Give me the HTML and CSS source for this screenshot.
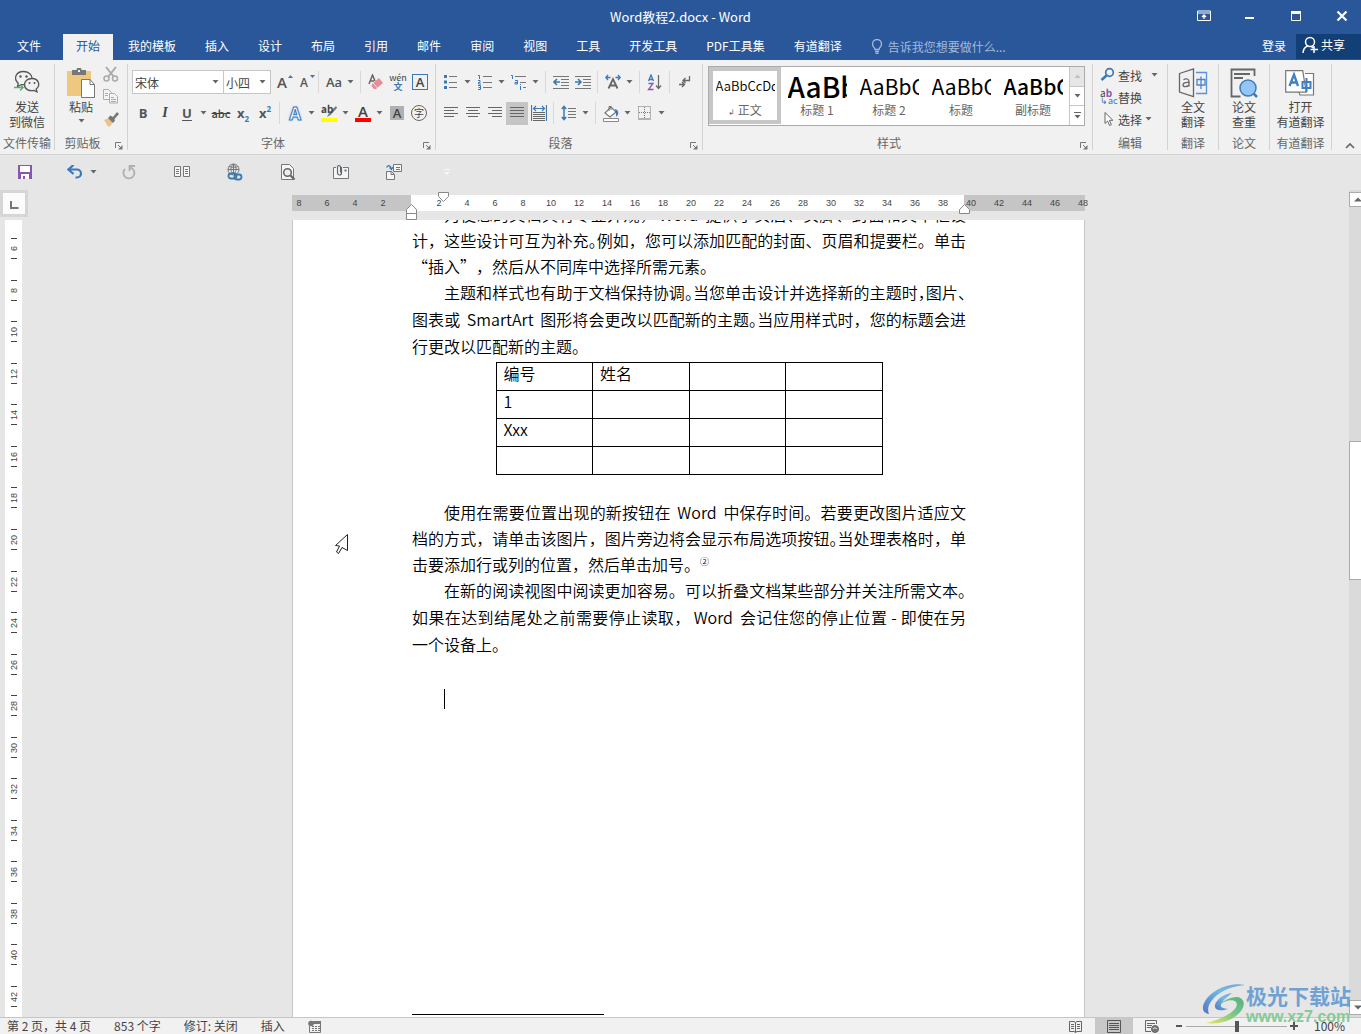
FILE: index.html
```html
<!DOCTYPE html>
<html lang="zh-CN">
<head>
<meta charset="utf-8">
<title>Word教程2.docx - Word</title>
<link rel="stylesheet" href="styles.css">
</head>
<body>
<svg class="defs" width="0" height="0" aria-hidden="true">
  <symbol id="caret" viewBox="0 0 7 4"><path d="M0.500 0h6L3.500 3.500z" fill="#666"/></symbol>
  <symbol id="launch" viewBox="0 0 8 8"><path d="M.5 6V.5H6" fill="none" stroke="#777"/><path d="M3 3l3 3" stroke="#777"/><path d="M7.500 3v4.500H3z" fill="#777"/></symbol>
</svg>

<header class="titlebar">
  <h1 class="doc-title">Word教程2.docx - Word</h1>
  <div class="window-buttons">
    <button type="button" aria-label="功能区显示选项"><svg width="14" height="12" viewBox="0 0 14 12"><path d="M.5 1h13v9.500H.5zM.5 3h13" fill="none" stroke="#fff"/><path d="M7 9V5M5 7l2-2 2 2" fill="none" stroke="#fff" stroke-width="1.300"/></svg></button>
    <button type="button" aria-label="最小化"><svg width="12" height="12"><path d="M1 7h9v2H1z" fill="#fff"/></svg></button>
    <button type="button" aria-label="最大化"><svg width="12" height="12"><path d="M1.500 1.500h9v9h-9zM1 2.500h10" fill="none" stroke="#fff"/><path d="M1 1h10v3H1z" fill="#fff"/></svg></button>
    <button type="button" aria-label="关闭"><svg width="12" height="12"><path d="M1.500 1.500l9 9M10.500 1.500l-9 9" stroke="#fff" stroke-width="2.200"/></svg></button>
  </div>
</header>

<nav class="tabs">
  <button type="button" class="tab file-tab">文件</button>
  <button type="button" class="tab active">开始</button>
  <button type="button" class="tab">我的模板</button>
  <button type="button" class="tab">插入</button>
  <button type="button" class="tab">设计</button>
  <button type="button" class="tab">布局</button>
  <button type="button" class="tab">引用</button>
  <button type="button" class="tab">邮件</button>
  <button type="button" class="tab">审阅</button>
  <button type="button" class="tab">视图</button>
  <button type="button" class="tab">工具</button>
  <button type="button" class="tab">开发工具</button>
  <button type="button" class="tab">PDF工具集</button>
  <button type="button" class="tab">有道翻译</button>
  <label class="tell-me">
    <svg width="12" height="15" viewBox="0 0 12 15"><path d="M4 10.500C4 8.500 1.500 8 1.500 5a4.500 4.500 0 0 1 9 0c0 3-2.500 3.500-2.500 5.500zM4 12.500h4M4.500 14.300h3" fill="none" stroke="#a3b9d9" stroke-width="1.300"/></svg>
    <input type="text" placeholder="告诉我您想要做什么..." aria-label="告诉我您想要做什么">
  </label>
  <button type="button" class="login">登录</button>
  <button type="button" class="share"><svg width="16" height="18" viewBox="0 0 16 18"><circle cx="8" cy="6" r="4.500" fill="none" stroke="#fff" stroke-width="1.500"/><path d="M1 17c.3-4 2-6 4.500-7M9.500 10.500L11 12M12 10v7M8.500 13.500H16" fill="none" stroke="#fff" stroke-width="1.500"/></svg>共享</button>
</nav>

<section class="ribbon">
  <div class="group g-wechat">
    <div class="body">
      <button type="button" class="big"><svg width="28" height="28" viewBox="0 0 28 28" fill="none" stroke="#555"><path d="M12 15.500c-1 .3-2 .3-3.500.1L4.500 17.500l.7-3.300C0 9.500 3 2.500 10.500 2.500c5 0 8.300 3 8.500 6.500" stroke-width="1.300"/><path d="M19 9.500c-4.500 0-7.500 2.800-7.500 6.200 0 4.300 4.500 6.800 9.300 5.700l3.200 1.500-.8-2.800c5-4 2-10.600-4.200-10.600z" stroke-width="1.300"/><path d="M1 18.500h9M7 15.500l3.200 3L7 21.500" stroke="#5faa6d" stroke-width="1.300"/><g fill="#555" stroke="none"><circle cx="7.500" cy="7.500" r="1.200"/><circle cx="13.500" cy="7.500" r="1.200"/><circle cx="16.500" cy="14" r="1"/><circle cx="21.500" cy="14" r="1"/></g></svg><span>发送<br>到微信</span></button>
    </div>
    <div class="caption">文件传输</div>
  </div>

  <div class="group g-clip">
    <div class="body">
      <button type="button" class="big paste"><svg width="28" height="30" viewBox="0 0 28 30"><path d="M0 3h24v25H0z" fill="#edc87e"/><path d="M5 2h4.500a2.500 2.500 0 0 1 5 0H19v5H5z" fill="#777"/><path d="M11 2h2v2h-2z" fill="#f1f1f1"/><path d="M14.500 11.500h8.500l4.500 5v13h-13z" fill="#fff" stroke="#777"/><path d="M23 11.500v5h4.500" fill="none" stroke="#777"/></svg><span>粘贴</span><svg class="caret" width="7" height="4"><use href="#caret"/></svg></button>
      <div class="clip-tools">
        <button type="button" aria-label="剪切"><svg width="16" height="16" fill="none" stroke="#aaa"><path d="M3 1l8 10M13 1L5 11" stroke-width="2"/><circle cx="3.500" cy="12.500" r="2.500" stroke-width="1.500"/><circle cx="12" cy="12.500" r="2.500" stroke-width="1.500"/></svg></button>
        <button type="button" aria-label="复制"><svg width="16" height="15" fill="#f5f1f7" stroke="#b0a8b4"><path d="M.5.5h5l3 3v7h-8z"/><path d="M6.500 4.500h5l3 3v6.500h-8z"/><path d="M2 4.500h3M2 6.500h3M8 8.500h3M8 10.500h5M8 12.500h5" fill="none"/></svg></button>
        <button type="button" aria-label="格式刷"><svg width="16" height="16"><path d="M1 9l5-2 4 4-3 4.500H5z" fill="#edc288"/><path d="M5 7l2.500-2.500L10 6l4-5 2 2-4.500 5 .5 1.500L10 12z" fill="#777"/></svg></button>
      </div>
    </div>
    <div class="caption with-launcher">剪贴板<button type="button" class="launcher" aria-label="剪贴板选项"><svg width="8" height="8"><use href="#launch"/></svg></button></div>
  </div>

  <div class="group g-font">
    <div class="body rows">
      <div class="row">
        <label class="combo wide"><select aria-label="字体"><option>宋体</option></select><svg class="caret" width="7" height="4"><use href="#caret"/></svg></label>
        <label class="combo"><select aria-label="字号"><option>小四</option></select><svg class="caret" width="7" height="4"><use href="#caret"/></svg></label>
        <button type="button" class="tool letter">A<svg class="sup" width="5" height="3"><path d="M0 3l2.500-3L5 3z" fill="#3c78b4"/></svg></button>
        <button type="button" class="tool letter small">A<svg class="sup" width="5" height="3"><path d="M0 0l2.500 3L5 0z" fill="#3c78b4"/></svg></button>
        <i class="sep"></i>
        <button type="button" class="tool aa">Aa</button><button type="button" class="drop" aria-label="更改大小写选项"><svg width="7" height="4"><use href="#caret"/></svg></button>
        <i class="sep"></i>
        <button type="button" class="tool" aria-label="清除格式"><svg width="16" height="16"><path d="M1 10L4.500 1 7 7M2.500 7H6" fill="none" stroke="#666" stroke-width="1.500"/><path d="M4 10l7-6 4 5-7 6H6l-2.500-3z" fill="#ea8c96"/><path d="M5 9l4.500 5" stroke="#f8dcdf"/></svg></button>
        <button type="button" class="tool pinyin"><span>wén</span><b>文</b></button>
        <button type="button" class="tool"><span class="boxed-a">A</span></button>
      </div>
      <div class="row">
        <button type="button" class="tool bold">B</button>
        <button type="button" class="tool italic">I</button>
        <button type="button" class="tool underline">U</button><button type="button" class="drop" aria-label="下划线选项"><svg width="7" height="4"><use href="#caret"/></svg></button>
        <button type="button" class="tool strike">abc</button>
        <button type="button" class="tool script">x<sub>2</sub></button>
        <button type="button" class="tool script">x<sup>2</sup></button>
        <i class="sep"></i>
        <button type="button" class="tool effect">A</button><button type="button" class="drop" aria-label="文本效果选项"><svg width="7" height="4"><use href="#caret"/></svg></button>
        <button type="button" class="tool highlight"><span>ab</span><svg width="16" height="17"><path d="M15 1L8 8l-2 4 3.500-2L16 3z" fill="#777"/><path d="M0 13h16v4H0z" fill="#ff0"/></svg></button><button type="button" class="drop" aria-label="突出显示颜色"><svg width="7" height="4"><use href="#caret"/></svg></button>
        <button type="button" class="tool"><span class="font-color">A</span></button><button type="button" class="drop" aria-label="字体颜色选项"><svg width="7" height="4"><use href="#caret"/></svg></button>
        <button type="button" class="tool"><span class="shaded-a">A</span></button>
        <button type="button" class="tool"><span class="circled">字</span></button>
      </div>
    </div>
    <div class="caption with-launcher">字体<button type="button" class="launcher" aria-label="字体选项"><svg width="8" height="8"><use href="#launch"/></svg></button></div>
  </div>

  <div class="group g-para">
    <div class="body rows">
      <div class="row">
        <button type="button" class="tool" aria-label="项目符号"><svg width="16" height="16"><path d="M1 1h3v3H1zM1 6.500h3v3H1zM1 12h3v3H1z" fill="#3c78b4"/><path d="M6 2.500h8M6 8.500h8M6 13.500h8" stroke="#777"/></svg></button><button type="button" class="drop" aria-label="项目符号选项"><svg width="7" height="4"><use href="#caret"/></svg></button>
        <button type="button" class="tool" aria-label="编号"><svg width="16" height="16"><path d="M1 1.500h1.500V5M1 6.500h2v2H1.500V10H4M1 11.500h2.500v4H1M1.500 13.500h2" fill="none" stroke="#3c78b4"/><path d="M6 2.500h9M6 8.500h9M6 13.500h9" stroke="#777"/></svg></button><button type="button" class="drop" aria-label="编号选项"><svg width="7" height="4"><use href="#caret"/></svg></button>
        <button type="button" class="tool" aria-label="多级列表"><svg width="18" height="16"><path d="M1 1.500h1.500V5M5 6.500h2.500V10H5V8.500h2M10.500 10v1M10.500 12v4" fill="none" stroke="#3c78b4"/><path d="M5 2.500h11M10 8.500h6M13 13.500h3" stroke="#777"/></svg></button><button type="button" class="drop" aria-label="多级列表选项"><svg width="7" height="4"><use href="#caret"/></svg></button>
        <i class="sep"></i>
        <button type="button" class="tool" aria-label="减少缩进量"><svg width="16" height="14"><path d="M0 1.500h16M8 4.500h8M8 7.500h8M8 10.500h8M0 13.500h16" stroke="#777"/><path d="M7 7H1M4 4L1 7l3 3" fill="none" stroke="#3c78b4" stroke-width="1.600"/></svg></button>
        <button type="button" class="tool" aria-label="增加缩进量"><svg width="16" height="14"><path d="M0 1.500h16M8 4.500h8M8 7.500h8M8 10.500h8M0 13.500h16" stroke="#777"/><path d="M0 7h6M3 4l3 3-3 3" fill="none" stroke="#3c78b4" stroke-width="1.600"/></svg></button>
        <i class="sep"></i>
        <button type="button" class="tool" aria-label="中文版式"><svg width="16" height="16"><path d="M3.500 14.500L8 5l4.500 9.500M5 11.500h6" fill="none" stroke="#666" stroke-width="1.800"/><path d="M5.500 3.500H1M3 1L.8 3.500 3 6M10.500 3.500H15M13 1l2.200 2.500L13 6" fill="none" stroke="#3c78b4" stroke-width="1.300"/></svg></button><button type="button" class="drop" aria-label="中文版式选项"><svg width="7" height="4"><use href="#caret"/></svg></button>
        <i class="sep"></i>
        <button type="button" class="tool" aria-label="排序"><svg width="16" height="17" fill="none"><path d="M1.500 7L4 1l2.500 6M2.500 5.500h3" stroke="#3c78b4" stroke-width="1.300"/><path d="M1.500 9.500H6L1.500 15.500H6.500" stroke="#9055b0" stroke-width="1.300"/><path d="M11.500 1v13M9 11.500l2.500 3 2.500-3" stroke="#666" stroke-width="1.200"/></svg></button>
        <i class="sep"></i>
        <button type="button" class="tool" aria-label="显示编辑标记"><svg width="14" height="14" fill="none" stroke="#666"><path d="M11.500 1v4.500H5M7.500 3L5 5.500 7.500 8M1 9.500h5M4 7l2.500 2.500L4 12" stroke-width="1.300"/></svg></button>
      </div>
      <div class="row">
        <button type="button" class="tool" aria-label="左对齐"><svg width="14" height="12"><path d="M0 .5h14M0 3.500h10M0 6.500h14M0 9.500h10" stroke="#666"/></svg></button>
        <button type="button" class="tool" aria-label="居中"><svg width="14" height="12"><path d="M0 .5h14M2 3.500h10M0 6.500h14M2 9.500h10" stroke="#666"/></svg></button>
        <button type="button" class="tool" aria-label="右对齐"><svg width="14" height="12"><path d="M0 .5h14M4 3.500h10M0 6.500h14M4 9.500h10" stroke="#666"/></svg></button>
        <button type="button" class="tool pressed" aria-label="两端对齐"><svg width="14" height="12"><path d="M0 .5h14M0 3.500h14M0 6.500h14M0 9.500h14" stroke="#666"/></svg></button>
        <button type="button" class="tool" aria-label="分散对齐"><svg width="16" height="16"><path d="M.5 0v16M15.500 0v16M3 3.500h10M5 1L2.500 3.500 5 6M11 1l2.500 2.500L11 6" fill="none" stroke="#3c78b4" stroke-width="1.200"/><path d="M2 7.500h12M2 9.500h12M2 11.500h12M2 13.500h12M2 15.500h12" stroke="#666"/></svg></button>
        <i class="sep"></i>
        <button type="button" class="tool" aria-label="行距"><svg width="16" height="16"><path d="M3 1v14M.8 4L3 1.500 5.200 4M.8 12L3 14.500 5.200 12" fill="none" stroke="#3c78b4" stroke-width="1.500"/><path d="M7 3.500h8M7 6.500h8M7 9.500h8M7 12.500h8" stroke="#777"/></svg></button><button type="button" class="drop" aria-label="行距选项"><svg width="7" height="4"><use href="#caret"/></svg></button>
        <i class="sep"></i>
        <button type="button" class="tool" aria-label="底纹"><svg width="16" height="17"><path d="M2 8l6-6 5 5-6 5z" fill="#fff" stroke="#777" stroke-width="1.200"/><path d="M6 6V1.500h2V5" fill="none" stroke="#777"/><path d="M12 4c4 1 4 5 1.500 8z" fill="#3c78b4"/><path d="M.5 13.500h15v3H.5z" fill="#fff" stroke="#888"/></svg></button><button type="button" class="drop" aria-label="底纹选项"><svg width="7" height="4"><use href="#caret"/></svg></button>
        <button type="button" class="tool" aria-label="边框"><svg width="14" height="14" fill="none" stroke="#777"><path d="M.5.5h12v12M.5.5v12M6.500 1v11M1 6.500h12" stroke-dasharray="1 1"/><path d="M0 13h13"/></svg></button><button type="button" class="drop" aria-label="边框选项"><svg width="7" height="4"><use href="#caret"/></svg></button>
      </div>
    </div>
    <div class="caption with-launcher">段落<button type="button" class="launcher" aria-label="段落选项"><svg width="8" height="8"><use href="#launch"/></svg></button></div>
  </div>

  <div class="group g-styles">
    <div class="body">
      <div class="gallery">
        <div class="styles">
          <button type="button" class="style selected"><span class="sample normal">AaBbCcDd</span><span class="name"><small>↲</small> 正文</span></button>
          <button type="button" class="style"><span class="sample h1">AaBb</span><span class="name">标题 1</span></button>
          <button type="button" class="style"><span class="sample h2">AaBbC</span><span class="name">标题 2</span></button>
          <button type="button" class="style"><span class="sample h2">AaBbC</span><span class="name">标题</span></button>
          <button type="button" class="style"><span class="sample h2 strong">AaBbC</span><span class="name">副标题</span></button>
        </div>
        <div class="gallery-nav">
          <button type="button" class="off" aria-label="上一行"><svg width="7" height="4"><path d="M.5 4h6L3.500.5z" fill="#c0c0c0"/></svg></button>
          <button type="button" aria-label="下一行"><svg width="7" height="4"><use href="#caret"/></svg></button>
          <button type="button" aria-label="其他"><svg width="7" height="7"><path d="M0 .5h7" stroke="#666"/><path d="M.5 3h6L3.500 6.500z" fill="#666"/></svg></button>
        </div>
      </div>
    </div>
    <div class="caption with-launcher">样式<button type="button" class="launcher" aria-label="样式选项"><svg width="8" height="8"><use href="#launch"/></svg></button></div>
  </div>

  <div class="group g-edit">
    <div class="body edit-list">
      <button type="button"><svg width="16" height="16"><circle cx="9.500" cy="5.500" r="3.800" fill="none" stroke="#3c78b4" stroke-width="1.700"/><path d="M6.500 8.500L1.500 13" stroke="#3c78b4" stroke-width="2.500"/></svg>查找<svg class="caret far" width="7" height="4"><use href="#caret"/></svg></button>
      <button type="button"><span class="replace"><span>a<b>b</b></span><em>↳ac</em></span>替换</button>
      <button type="button"><svg width="16" height="16"><path d="M5 1.500v11l2.600-2.500 2 4.500 1.800-.8-2-4.400h3.500z" fill="#fff" stroke="#666"/></svg>选择<svg class="caret" width="7" height="4"><use href="#caret"/></svg></button>
    </div>
    <div class="caption">编辑</div>
  </div>

  <div class="group g-trans">
    <div class="body">
      <button type="button" class="big"><svg width="30" height="30" viewBox="0 0 30 30"><path d="M1.500 5.500L15.500 1v27.500L1.500 24z" fill="none" stroke="#666" stroke-width="1.300"/><path d="M18 4.500h10.500v21H18" fill="none" stroke="#5b93d8" stroke-width="1.300"/><path d="M19 11.500h8v5.500h-8zM23 8.500V21" fill="none" stroke="#4a85d0" stroke-width="1.300"/><path d="M5.500 11.500c3-1.500 5.500-.5 5.500 2v5M11 14.500c-4-.5-6 .5-6 2.500s4 2.500 6 0" fill="none" stroke="#666" stroke-width="1.300"/></svg><span>全文<br>翻译</span></button>
    </div>
    <div class="caption">翻译</div>
  </div>

  <div class="group g-trans">
    <div class="body">
      <button type="button" class="big"><svg width="30" height="30" viewBox="0 0 30 30"><path d="M25.500 8V1.500h-23v27h9" fill="none" stroke="#666" stroke-width="1.800"/><path d="M5 6h16M5 10h9" stroke="#666" stroke-width="1.800"/><circle cx="19" cy="20" r="8" fill="#93c5f6" stroke="#3f7db5" stroke-width="1.500"/><path d="M24.500 25.500l3.500 3.500" stroke="#3f7db5" stroke-width="2.500"/></svg><span>论文<br>查重</span></button>
    </div>
    <div class="caption">论文</div>
  </div>

  <div class="group g-youdao">
    <div class="body">
      <button type="button" class="big"><svg width="30" height="30" viewBox="0 0 30 30"><path d="M12 24h2l1 3h13.500V5.500H20" fill="#fff" stroke="#777" stroke-width="1.200"/><path d="M.7 2.700h17l3.500 21.500H.7z" fill="#fff" stroke="#777" stroke-width="1.200"/><path d="M4.500 18L9 6.500 13 18M6 14.500h6" fill="none" stroke="#3f7fc4" stroke-width="2.300"/><path d="M17.500 14h8v6h-8zM21.500 10v14" fill="none" stroke="#3f7fc4" stroke-width="2"/></svg><span>打开<br>有道翻译</span></button>
    </div>
    <div class="caption">有道翻译</div>
  </div>
  <button type="button" class="collapse" aria-label="折叠功能区"><svg width="10" height="6"><path d="M1 5l4-4 4 4" fill="none" stroke="#666" stroke-width="1.700"/></svg></button>
</section>

<section class="quick">
  <button type="button" aria-label="保存"><svg width="16" height="16"><path d="M1 1h14v14H1z" fill="#8a55ad"/><path d="M3 2h10v6H3zM4 10h8v5H4z" fill="#fff"/><path d="M6 12h2v3H6z" fill="#8a55ad"/></svg></button>
  <button type="button" class="undo" aria-label="撤消"><svg width="16" height="14"><path d="M2 4.500h8a4 4 0 0 1 0 8H8.500" fill="none" stroke="#3c78b4" stroke-width="2.200"/><path d="M6.500 0L1.500 4.500l5 4.500" fill="none" stroke="#3c78b4" stroke-width="2.200"/></svg><svg class="caret" width="7" height="4"><use href="#caret"/></svg></button>
  <button type="button" aria-label="重复"><svg width="16" height="16" fill="none" stroke="#b0b0b0" stroke-width="1.800"><path d="M9 3.500a5.500 5.500 0 1 1-5 1.500M8.500 7V2H14"/></svg></button>
  <button type="button" aria-label="阅读"><svg width="18" height="14" fill="#f6f6f6" stroke="#777"><path d="M1.500 1.500h6v10h-6zM10.500 1.500h6v10h-6z"/><path d="M3 4.500h3M3 6.500h3M3 8.500h3M12 4.500h3M12 6.500h3M12 8.500h3"/></svg></button>
  <button type="button" aria-label="超链接"><svg width="18" height="18" fill="none"><circle cx="7.500" cy="6.500" r="5.500" stroke="#777"/><path d="M2 6.500h11M7.500 1v10M3 3.500c3 1 6 1 9 0M7.500 1c-3.500 3-3.500 7 0 10M7.500 1c3.500 3 3.500 7 0 10" stroke="#777"/><rect x="2.500" y="10.500" width="8" height="5" rx="2.500" stroke="#3c78b4" stroke-width="1.800"/><rect x="8.500" y="11.500" width="7" height="5" rx="2.500" stroke="#3c78b4" stroke-width="1.800"/></svg></button>
  <button type="button" aria-label="打印预览"><svg width="16" height="18"><path d="M1.500 1.500h8l4 4v11h-12z" fill="#f6f6f6" stroke="#777"/><circle cx="7.500" cy="9.500" r="3.800" fill="#eee" stroke="#666" stroke-width="1.500"/><path d="M10.500 12.500l4 4" stroke="#666" stroke-width="2.200"/></svg></button>
  <button type="button" aria-label="邮件"><svg width="18" height="16" fill="none" stroke="#777"><path d="M4 3.500H1.500v11h15v-11H11" fill="#f6f6f6"/><path d="M9.500 3v6a2 2 0 0 1-4 0V3a1.500 1.500 0 0 1 3 0v5.500" stroke="#666" stroke-width="1.200"/><path d="M12.500 5.500h2v2h-2z" fill="#3c78b4" stroke="none"/></svg></button>
  <button type="button" aria-label="插入"><svg width="18" height="18" fill="#f6f6f6" stroke="#777"><path d="M8.500 1.500h8v7h-8zM1.500 8.500h5l3 3v5h-8zM6 8.500v3h3"/><path d="M11 4.500h4M11 6.500h4"/><path d="M1.500 4.500c2-3 4-2 5 1.500M4.500 4.500l2 2 1.500-2.500" fill="none" stroke="#3c78b4" stroke-width="1.200"/></svg></button>
  <button type="button" aria-label="自定义快速访问工具栏"><svg width="6" height="7"><path d="M0 .5h6" stroke="#f6f6f6"/><path d="M0 3h6L3 6z" fill="#f6f6f6"/></svg></button>
</section>

<main class="work">
  <button type="button" class="tab-stop" aria-label="制表符"><svg width="22" height="21"><path d="M8 8v7h7.500" fill="none" stroke="#777" stroke-width="2"/></svg></button>
  <div class="ruler">
    <div class="hruler">
      <ol class="marks"><li>8</li><li>6</li><li>4</li><li>2</li><li></li><li>2</li><li>4</li><li>6</li><li>8</li><li>10</li><li>12</li><li>14</li><li>16</li><li>18</li><li>20</li><li>22</li><li>24</li><li>26</li><li>28</li><li>30</li><li>32</li><li>34</li><li>36</li><li>38</li><li>40</li><li>42</li><li>44</li><li>46</li><li>48</li></ol>
      <svg class="mark first" width="12" height="10"><path d="M.5.5h10v4L5.500 9.500l-5-5z" fill="#fff" stroke="#888"/></svg>
      <svg class="mark left" width="12" height="16"><path d="M.5 15.500v-10l5-5 5 5v10zM.5 9.500h10" fill="#fff" stroke="#888"/></svg>
      <svg class="mark right" width="12" height="10"><path d="M.5 9.500v-4l5-5 5 5v4z" fill="#fff" stroke="#888"/></svg>
    </div>
  </div>
  <ol class="vruler"><li><span>6</span></li><li><span>8</span></li><li><span>10</span></li><li><span>12</span></li><li><span>14</span></li><li><span>16</span></li><li><span>18</span></li><li><span>20</span></li><li><span>22</span></li><li><span>24</span></li><li><span>26</span></li><li><span>28</span></li><li><span>30</span></li><li><span>32</span></li><li><span>34</span></li><li><span>36</span></li><li><span>38</span></li><li><span>40</span></li><li><span>42</span></li></ol>
  <div class="canvas">
    <article class="page">
      <div class="text">
        <p class="tight"><span class="line indent">为使您的文档具有专业外观，<b>Word</b> 提供了页眉、页脚、封面和文本框设</span><span class="line">计，这些设计可互为补充<i>。</i>例如，您可以添加匹配的封面、页眉和提要栏。单击</span><span class="line last">“插入”，然后从不同库中选择所需元素。</span></p>
        <p><span class="line indent">主题和样式也有助于文档保持协调<i>。</i>当您单击设计并选择新的主题时<i>，</i>图片<i>、</i></span><span class="line">图表或 <b>SmartArt</b> 图形将会更改以匹配新的主题<i>。</i>当应用样式时，您的标题会进</span><span class="line last">行更改以匹配新的主题。</span></p>
        <table>
          <tr><td>编号</td><td>姓名</td><td></td><td></td></tr>
          <tr><td>1</td><td></td><td></td><td></td></tr>
          <tr><td>Xxx</td><td></td><td></td><td></td></tr>
          <tr><td></td><td></td><td></td><td></td></tr>
        </table>
        <p class="tight"><span class="line indent">使用在需要位置出现的新按钮在 <b>Word</b> 中保存时间。若要更改图片适应文</span><span class="line">档的方式，请单击该图片，图片旁边将会显示布局选项按钮<i>。</i>当处理表格时，单</span><span class="line last">击要添加行或列的位置，然后单击加号。<sup>②</sup></span></p>
        <p><span class="line indent">在新的阅读视图中阅读更加容易。可以折叠文档某些部分并关注所需文本<i>。</i></span><span class="line">如果在达到结尾处之前需要停止读取，<b>Word</b> 会记住您的停止位置 - 即使在另</span><span class="line last">一个设备上。</span></p>
        <div class="insertion"></div>
      </div>
      <hr class="footnote-rule">
      <svg class="pointer" width="14" height="20"><path d="M12.500.5L.5 11.500l4 .5-3 6 2 1.500 3.500-6 5.500 3z" fill="#fff" stroke="#222"/></svg>
    </article>
  </div>
  <div class="scrollbar">
    <div class="scroll-btn"><svg width="8" height="5"><path d="M0 4.500h8L4 .5z" fill="#666"/></svg></div>
    <div class="track"><div class="thumb"></div></div>
    <div class="scroll-btn"><svg width="8" height="5"><path d="M0 .5h8L4 4.500z" fill="#666"/></svg></div>
  </div>
</main>

<footer class="status">
  <span>第 2 页，共 4 页</span><span>853 个字</span><span>修订: 关闭</span><span>插入</span>
  <svg width="14" height="13"><path d="M5 1h8v3H5z" fill="#777"/><path d="M1.500 6v6.500h11V3" fill="none" stroke="#777"/><circle cx="3" cy="3.500" r="2.800" fill="#777"/><path d="M4 6.500h8M4 8.500h8M4 10.500h8" stroke="#777" stroke-dasharray="2 1"/></svg>
  <div class="views">
    <button type="button" aria-label="阅读视图"><svg width="14" height="13" fill="none" stroke="#666"><path d="M.5 1.500h5L6.500 3l1-1.500h5v10h-5L6.500 13l-1-1.500h-5zM6.500 3v9M2 4.500h3M2 6.500h3M2 8.500h3M8 4.500h3M8 6.500h3M8 8.500h3"/></svg></button>
    <button type="button" class="on" aria-label="页面视图"><svg width="14" height="13" fill="none" stroke="#555"><path d="M.5.5h13v12H.5zM2 3.500h10M2 5.500h10M2 7.500h10M2 9.500h10"/></svg></button>
    <button type="button" aria-label="Web 版式视图"><svg width="15" height="13" fill="none" stroke="#666"><path d="M6 11.500H.5v-11h11V4M2 3.500h8M2 5.500h5M2 7.500h4"/><circle cx="10" cy="9" r="3.500" fill="#777"/><path d="M8 9c2-3 3 1 4-1" stroke="#eee"/></svg></button>
  </div>
  <div class="zoom"><button type="button" aria-label="缩小"><svg width="8" height="8"><path d="M1 4h6" stroke="#555" stroke-width="2"/></svg></button><input type="range" min="0" max="200" value="100" aria-label="缩放"><button type="button" aria-label="放大"><svg width="8" height="8"><path d="M0 4h8M4 0v8" stroke="#555" stroke-width="2"/></svg></button></div>
  <span class="percent">100%</span>
</footer>

<div class="watermark">
  <svg width="44" height="42" viewBox="0 0 44 42">
    <defs><linearGradient id="wb" x1="0" y1="1" x2="1" y2="0"><stop offset="0" stop-color="#3a62ba"/><stop offset=".6" stop-color="#5fb2e8"/><stop offset="1" stop-color="#5d9ad2"/></linearGradient><linearGradient id="wg" x1="0" y1="1" x2="1" y2="0"><stop offset="0" stop-color="#e3e34f"/><stop offset=".6" stop-color="#62be7a"/><stop offset="1" stop-color="#3fa86a"/></linearGradient></defs>
    <path d="M43 2C31-1 15 4 6 14-1 22-1 30 7 31c-3-7 2-15 11-21C26 5 33 3 43 2z" fill="url(#wb)"/>
    <path d="M30 10C20 11 12 19 13 24c1 4 7 4 13 2-4-1-8-1-7-4 1-4 6-8 11-12z" fill="url(#wb)"/>
    <path d="M17 22c7-5 14-6 17-3 4 5-6 15-30 21 14 2 28-3 35-12 5-7 3-13-4-14-7 0-14 4-18 8z" fill="url(#wg)"/>
  </svg>
  <div><strong>极光下载站</strong><span>www.xz7.com</span></div>
</div>
</body>
</html>
```
FILE: styles.css
```css
* { box-sizing: border-box; }
body {
  margin: 0;
  height: 100vh;
  display: flex;
  flex-direction: column;
  overflow: hidden;
  position: relative;
  background: #e6e6e6;
  color: #444;
  font: 12px/15px "Noto Sans CJK SC", sans-serif;
}
button, input, select { font: inherit; color: inherit; }
button { border: 0; padding: 0; margin: 0; background: none; white-space: nowrap; }
svg { flex: none; display: block; }
ol { list-style: none; margin: 0; padding: 0; }
.defs { position: absolute; }

/* title bar */
.titlebar { height: 34px; flex: none; display: grid; grid-template-columns: 1fr auto 1fr; align-items: center; background: #2a579a; color: #fff; }
.doc-title { grid-column: 2; margin: 0; font-size: 13px; line-height: 18px; font-weight: 400; }
.window-buttons { display: flex; justify-content: flex-end; margin-right: -4px; }
.window-buttons button { width: 46px; height: 34px; padding-bottom: 2px; display: flex; align-items: center; justify-content: center; }

/* tabs */
.tabs { height: 26px; flex: none; display: flex; gap: 1px; background: #2a579a; color: #fff; }
.tab { padding: 0 14px 4px; }
.file-tab { margin: 0 7px 0 3px; }
.tab.active { padding: 0 13px 4px; background: #f1f1f1; color: #2a579a; }
.tell-me { display: flex; align-items: center; gap: 5px; flex: 1; padding: 0 0 2px 14px; }
.tell-me input { flex: 1; min-width: 0; border: 0; padding: 0; background: none; }
.tell-me input::placeholder { color: #a3b9d9; opacity: 1; }
.login { padding: 0 9px 4px; }
.share { display: flex; align-items: center; gap: 3px; width: 65px; height: 25px; padding: 0 0 4px 6px; background: #123f76; }

/* ribbon */
.ribbon { flex: none; display: flex; height: 95px; padding: 4px 0; background: #f1f1f1; border-bottom: 1px solid #d2d2d2; }
.group { display: flex; flex-direction: column; border-right: 1px solid #d2d2d2; flex: none; }
.g-wechat { width: 55px; }
.g-clip { width: 73px; }
.g-font { width: 308px; }
.g-para { width: 267px; }
.g-styles { flex: 1; min-width: 0; }
.g-edit { width: 75px; }
.g-trans { width: 51px; }
.g-youdao { width: 62px; }
.body { flex: 1; display: flex; justify-content: center; min-width: 0; min-height: 0; }
.caption { position: relative; height: 16px; flex: none; line-height: 18px; text-align: center; color: #666; white-space: nowrap; }
.with-launcher { padding-right: 17px; }
.launcher { position: absolute; right: 4px; bottom: 0; }
.big { display: flex; flex-direction: column; align-items: center; gap: 1px; padding-top: 4px; line-height: 15px; height: 66px; }
.big svg:first-child { height: 30px; }
.big .caret { margin-top: 4px; }
.g-clip .body { justify-content: flex-start; padding-left: 12px; gap: 8px; }
.clip-tools { display: flex; flex-direction: column; gap: 7px; padding-top: 2px; }

.rows { flex-direction: column; justify-content: flex-start; gap: 7px; padding: 6px 0 0 4px; }
.row { display: flex; align-items: center; height: 24px; }
.combo { position: relative; display: flex; align-items: center; width: 48px; height: 24px; background: #fff; border: 1px solid #c6c6c6; }
.combo.wide { width: 92px; margin-right: -1px; }
.combo select { appearance: none; border: 0; background: none; width: 100%; padding: 0 2px; outline: 0; }
.combo .caret { position: absolute; right: 4px; pointer-events: none; }
.tool { position: relative; width: 22px; height: 23px; display: flex; align-items: center; justify-content: center; flex: none; }
.drop { width: 12px; height: 23px; display: flex; align-items: center; padding-left: 2px; }
.sep { width: 1px; height: 22px; margin: 0 4px 0 3px; background: #d8d8d8; }
.pressed { background: #c5c5c5; }
.letter, .aa, .bold, .underline, .script { color: #555; font-family: "Open Sans", sans-serif; }
.letter { font-size: 15px; font-weight: 600; }
.letter.small { font-size: 12px; }
.sup { position: absolute; right: 0; top: 4px; }
.aa { font-size: 13px; font-weight: 600; }
.bold { font-weight: 700; font-size: 13px; }
.italic { font: italic 700 14px "Liberation Serif", serif; }
.underline { font-weight: 700; font-size: 13px; text-decoration: underline; text-underline-offset: 2px; }
.strike { text-decoration: line-through; font-size: 11px; font-weight: 500; }
.script { font-weight: 700; font-size: 13px; }
.script sub, .script sup { font-size: 8px; line-height: 8px; color: #3c78b4; }
.script sub { align-self: flex-end; padding-bottom: 2px; }
.script sup { align-self: flex-start; padding-top: 3px; }
.effect { font: 700 17px "Open Sans", sans-serif; color: #fff; -webkit-text-stroke: 1px #3c78b4; text-shadow: 0 0 3px #8db8e4; }
.pinyin { flex-direction: column; font-size: 9px; line-height: 9px; }
.pinyin b { color: #3c78b4; }
.boxed-a { width: 16px; height: 16px; border: 1px solid #3c78b4; font: 600 13px/14px "Open Sans", sans-serif; }
.highlight span { position: absolute; left: 3px; top: 2px; font-size: 10px; font-weight: 700; line-height: 10px; }
.font-color { width: 16px; height: 17px; border-bottom: 4px solid #f00; font: 600 15px/13px "Open Sans", sans-serif; }
.shaded-a { width: 14px; height: 14px; background: #b0b0b0; font: 600 13px/14px "Open Sans", sans-serif; }
.circled { width: 16px; height: 16px; border: 1px solid #666; border-radius: 50%; font-size: 10px; line-height: 14px; }

.g-styles .body { padding: 2px 7px 0 5px; }
.gallery { display: flex; flex: 1; min-width: 0; height: 60px; background: #fff; border: 1px solid #ababab; }
.styles { flex: 1; display: flex; min-width: 0; overflow: hidden; }
.style { width: 72px; flex: none; height: 58px; padding: 4px 3px 0; border: 4px solid transparent; border-width: 0 4px; display: flex; flex-direction: column; align-items: center; }
.style.selected { border: 4px solid #c6c6c6; padding-top: 0; height: 57px; }
.sample { width: 59px; height: 31px; line-height: 30px; overflow: hidden; text-align: left; color: #000; }
.normal { font-size: 13px; font-weight: 350; }
.h1 { font-size: 28px; font-weight: 500; }
.h2 { font-size: 21px; }
.strong { font-weight: 500; }
.name { line-height: 16px; color: #666; }
.name small { font-size: 8px; }
.gallery-nav { width: 15px; display: flex; flex-direction: column; border-left: 1px solid #c6c6c6; }
.gallery-nav button { flex: 1; display: flex; align-items: center; justify-content: center; }
.gallery-nav button + button { border-top: 1px solid #c6c6c6; }
.gallery-nav .off { background: #e6e6e6; }

.edit-list { flex-direction: column; justify-content: flex-start; padding-left: 7px; }
.edit-list button { display: flex; align-items: center; gap: 2px; height: 22px; }
.edit-list .caret { margin-left: 1px; }
.edit-list .caret.far { margin-left: 7px; }
.replace { width: 16px; line-height: 8px; font-size: 10px; text-align: left; display: flex; flex-direction: column; }
.replace b { color: #8a55ad; }
.replace em { color: #3c78b4; font-style: normal; font-size: 9px; }
.collapse { width: 29px; display: flex; align-items: flex-end; justify-content: flex-end; padding: 0 6px 1px 0; }

/* quick access */
.quick { height: 35px; flex: none; display: flex; }
.quick button { width: 53px; padding-bottom: 1px; display: flex; align-items: center; justify-content: center; }
.quick button:first-child { width: 50px; }
.quick .undo { width: 52px; gap: 7px; padding-left: 11px; }

/* work area */
.work { flex: 1; min-height: 0; display: grid; grid-template: 30px 1fr / 28px 1fr 12px; }
.tab-stop { width: 28px; height: 27px; border: 3px solid #d6d6d6; background: #fbfbfb; }
.ruler { display: flex; justify-content: center; padding-top: 5px; }
.hruler { position: relative; width: 793px; height: 16px; background: linear-gradient(90deg, #c5c5c5 119px, #fff 119px 672px, #c5c5c5 672px); }
.marks { display: flex; margin-left: -7px; font: 9px/17px "Liberation Sans", sans-serif; }
.marks li { width: 28px; flex: none; text-align: center; }
.mark { position: absolute; }
.mark.first { left: 146px; top: -3px; }
.mark.left { left: 114px; top: 9px; }
.mark.right { left: 667px; top: 9px; }
.vruler { display: flex; flex-direction: column; width: 17px; margin-left: 5px; padding-top: 8px; background: #fff; font: 9px/10px "Liberation Sans", sans-serif; }
.vruler li { flex: 1; display: flex; align-items: center; justify-content: center; }
.vruler span { writing-mode: vertical-rl; transform: rotate(180deg); width: 6px; height: 21px; border: solid #444; border-width: 1px 0; text-align: center; display: flex; align-items: center; justify-content: center; }
.canvas { display: flex; justify-content: center; min-height: 0; overflow: hidden; }
.page { position: relative; width: 793px; overflow: hidden; background: #fff; border: solid #c6c6c6; border-width: 0 1px; padding: 0 118px 2px 119px; display: flex; flex-direction: column; color: #000; }
.text { margin-top: -19px; font-size: 16px; font-weight: 350; text-spacing-trim: space-all; }
.text p { margin: 0; line-height: 27px; }
.text p.tight { line-height: 26px; }
.line { display: block; white-space: nowrap; text-align: justify; text-align-last: justify; }
.line.indent { padding-left: 32px; }
.line.last { text-align-last: left; }
.line i { font-style: normal; font-feature-settings: "halt"; }
.text b { font-weight: inherit; padding: 0 3px; }
.text sup { font-size: 9px; line-height: 9px; vertical-align: 6px; }
.text table { width: 387px; margin: 2px auto 24px; border-collapse: collapse; table-layout: fixed; line-height: 20px; }
.text td { height: 28px; padding: 0 7px; border: 1px solid #000; vertical-align: top; }
.insertion { width: 1px; height: 20px; margin: 31px 0 0 32px; background: #000; }
.footnote-rule { width: 192px; margin: auto 0 0; border: 0; border-top: 1px solid #000; }
.pointer { position: absolute; left: 42px; top: 314px; }
.scrollbar { grid-column: 3; grid-row: 1 / 3; display: flex; flex-direction: column; padding: 2px 0; overflow: hidden; background: #dadada; }
.scroll-btn { width: 17px; height: 15px; flex: none; display: flex; align-items: center; justify-content: center; background: #fff; border: 1px solid #ababab; }
.track { flex: 1; display: flex; flex-direction: column; }
.track::before { content: ""; flex: 235; }
.track::after { content: ""; flex: 422; }
.thumb { flex: 137; width: 17px; background: #fff; border: 1px solid #ababab; }

/* status bar */
.status { height: 17px; flex: none; display: flex; align-items: center; gap: 23px; padding-left: 7px; background: #f1f1f1; border-top: 1px solid #c6c6c6; white-space: nowrap; text-spacing-trim: space-all; }
.status > span { line-height: 16px; }
.views { display: flex; margin-left: auto; height: 16px; }
.views button { width: 38px; display: flex; align-items: center; justify-content: center; }
.views .on { background: #c8c8c8; }
.zoom { display: flex; align-items: center; gap: 3px; margin-left: -19px; }
.zoom input { appearance: none; width: 101px; height: 12px; margin: 0; background: linear-gradient(#aaa, #aaa) center / 100% 1px no-repeat; }
.zoom input::-webkit-slider-thumb { appearance: none; width: 4px; height: 11px; background: #555; }
.percent { width: 47px; margin-left: -7px; }

.watermark { position: absolute; right: 10px; bottom: 8px; display: flex; opacity: .85; }
.watermark div { display: flex; flex-direction: column; color: #5b95d0; }
.watermark strong { font-size: 21px; line-height: 25px; }
.watermark span { font: 700 16px/18px "Liberation Sans", sans-serif; color: #72c78a; }
```
